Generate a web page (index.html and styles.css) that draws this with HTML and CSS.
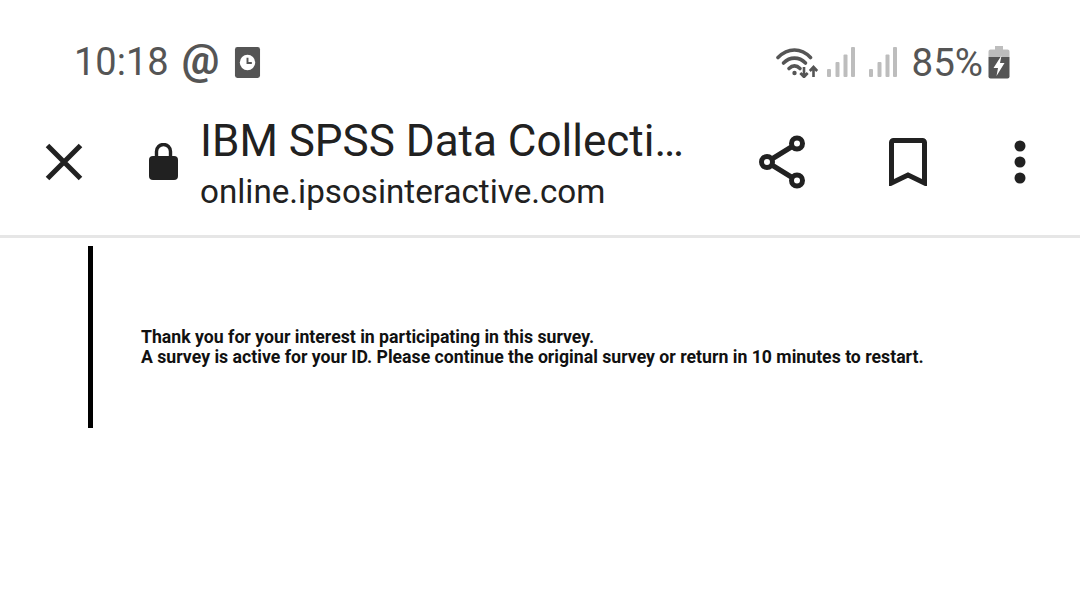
FILE: index.html

```html
<!DOCTYPE html>
<html lang="en">
<head>
  <meta charset="UTF-8" />
  <meta name="viewport" content="width=device-width, initial-scale=1.0"/>
  <title>IBM SPSS Data Collection</title>
  <link rel="stylesheet" href="styles.css">
</head>
<body>
  <div class="status-bar">
    <div class="status-left">
      <span class="clock">10:18</span>
      <span class="at">@</span>
      <svg class="clock-icon" width="27" height="33" viewBox="0 0 28 33">
        <rect x="1" y="0.5" width="26" height="32" rx="2.5" fill="#555"/>
        <circle cx="14" cy="16.5" r="8" fill="#fff"/>
        <path d="M14 11.5v5.5h4.5" fill="none" stroke="#555" stroke-width="2"/>
      </svg>
    </div>
    <div class="status-right">
      <svg class="wifi" width="44" height="32" viewBox="0 0 44 32">
        <path d="M2 11.5C12 1.500 25 1.500 34.500 11.500" fill="none" stroke="#555" stroke-width="3.600" stroke-linecap="round"/>
        <path d="M7.500 17C14 10.500 23 10.500 29.500 17" fill="none" stroke="#555" stroke-width="3.600" stroke-linecap="round"/>
        <path d="M13 22.500C16.500 19 20.500 19 24 22.500" fill="none" stroke="#555" stroke-width="3.600" stroke-linecap="round"/>
        <circle cx="18.500" cy="27" r="2.200" fill="#555"/>
        <path d="M28 21v10M24.300 27l3.700 4 3.700-4M37.500 31V21M33.800 25l3.700-4 3.700 4" fill="none" stroke="#555" stroke-width="2.600"/>
      </svg>
      <svg class="signal" width="28" height="30" viewBox="0 0 28 30">
        <g fill="#bdbdbd">
          <rect x="0" y="22" width="4" height="8" rx="1"/>
          <rect x="8.500" y="15" width="4" height="15" rx="1"/>
          <rect x="16.500" y="7.500" width="4" height="22.500" rx="1"/>
          <rect x="24" y="0" width="4" height="30" rx="1"/>
        </g>
      </svg>
      <svg class="signal" width="28" height="30" viewBox="0 0 28 30">
        <g fill="#bdbdbd">
          <rect x="0" y="22" width="4" height="8" rx="1"/>
          <rect x="8.500" y="15" width="4" height="15" rx="1"/>
          <rect x="16.500" y="7.500" width="4" height="22.500" rx="1"/>
          <rect x="24" y="0" width="4" height="30" rx="1"/>
        </g>
      </svg>
      <span class="battery-text">85%</span>
      <svg class="battery" width="22" height="33" viewBox="0 0 22 33">
        <path d="M7 0h8v3.500h4.500a2 2 0 0 1 2 2V11H.5V5.500a2 2 0 0 1 2-2H7z" fill="#bdbdbd"/>
        <path d="M.5 11h21v19.500a2 2 0 0 1-2 2h-17a2 2 0 0 1-2-2z" fill="#555"/>
        <path d="M13.500 9.500l-8 12.500h4.500l-1.500 8 8-13h-4.500z" fill="#fff"/>
      </svg>
    </div>
  </div>

  <div class="toolbar">
    <svg class="close-icon" width="38" height="38" viewBox="0 0 38 38">
      <path d="M2.500 2.500l33 33M35.500 2.500l-33 33" fill="none" stroke="#212121" stroke-width="5"/>
    </svg>
    <svg class="lock-icon" width="29" height="37" viewBox="0 0 29 37">
      <path d="M7.500 14V8.500a7 7 0 0 1 14 0V14" fill="none" stroke="#212121" stroke-width="3.400"/>
      <rect x="0" y="13" width="29" height="24" rx="4" fill="#212121"/>
    </svg>
    <div class="page-info">
      <div class="page-title">IBM SPSS Data Collecti…</div>
      <div class="page-url">online.ipsosinteractive.com</div>
    </div>
    <svg class="share-icon" width="48" height="54" viewBox="0 0 48 54">
      <path d="M9 27L39 8.500M9 27l30 18.500" stroke="#212121" stroke-width="5" fill="none"/>
      <circle cx="9" cy="27" r="5.500" fill="#fff" stroke="#212121" stroke-width="5"/>
      <circle cx="39" cy="8.500" r="5.500" fill="#fff" stroke="#212121" stroke-width="5"/>
      <circle cx="39" cy="45.500" r="5.500" fill="#fff" stroke="#212121" stroke-width="5"/>
    </svg>
    <svg class="bookmark-icon" width="38" height="48" viewBox="0 0 38 48">
      <path d="M2.500 45V4.500a2 2 0 0 1 2-2h29a2 2 0 0 1 2 2V45L19 37z" fill="none" stroke="#212121" stroke-width="5"/>
    </svg>
    <svg class="more-icon" width="12" height="44" viewBox="0 0 12 44">
      <circle cx="6" cy="6" r="5.500" fill="#212121"/>
      <circle cx="6" cy="22" r="5.500" fill="#212121"/>
      <circle cx="6" cy="38" r="5.500" fill="#212121"/>
    </svg>
  </div>

  <div class="content">
    <div class="message-box">
      <p>Thank you for your interest in participating in this survey.<br>
      A survey is active for your ID. Please continue the original survey or return in 10 minutes to restart.</p>
    </div>
  </div>
</body>
</html>
```

FILE: styles.css

```css
html, body {
  margin: 0;
  height: 100%;
}
body {
  font-family: Roboto, "Liberation Sans", sans-serif;
  background: #fff;
  overflow: hidden;
}
svg {
  display: block;
  flex: none;
}
.status-bar {
  height: 100px;
  padding: 24px 70px 0 74px;
  box-sizing: border-box;
  display: flex;
  justify-content: space-between;
  align-items: center;
  color: #555;
}
.status-left, .status-right {
  display: flex;
  align-items: center;
}
.clock {
  font-size: 38px;
}
.at {
  font-size: 42px;
  font-weight: 700;
  margin-left: 13px;
  margin-bottom: 6px;
}
.clock-icon {
  margin-left: 15px;
}
.wifi {
  margin-right: 7px;
}
.signal {
  margin-right: 14px;
}
.battery-text {
  font-size: 38.5px;
  margin-left: 1px;
}
.battery {
  margin-left: 5px;
}
.toolbar {
  height: 123px;
  padding: 0 54px 12px 45px;
  display: flex;
  align-items: center;
  border-bottom: 3px solid #e6e6e6;
}
.lock-icon {
  margin-left: 66px;
}
.page-info {
  margin: 4px 0 0 22px;
  width: 558px;
  color: #212121;
}
.page-title {
  font-size: 44px;
  line-height: 52px;
}
.page-url {
  margin-top: 4px;
  font-size: 33.2px;
  line-height: 42px;
}
.bookmark-icon {
  margin-left: 83px;
}
.more-icon {
  margin-left: 87px;
}
.content {
  padding: 8px 0 0 88px;
}
.message-box {
  height: 182px;
  box-sizing: border-box;
  border-left: 5px solid #000;
  padding: 20px 0 0 48px;
  display: flex;
  align-items: center;
}
.message-box p {
  margin: 0;
  font-size: 17.68px;
  line-height: 20px;
  font-weight: 700;
  color: #111;
}
```
